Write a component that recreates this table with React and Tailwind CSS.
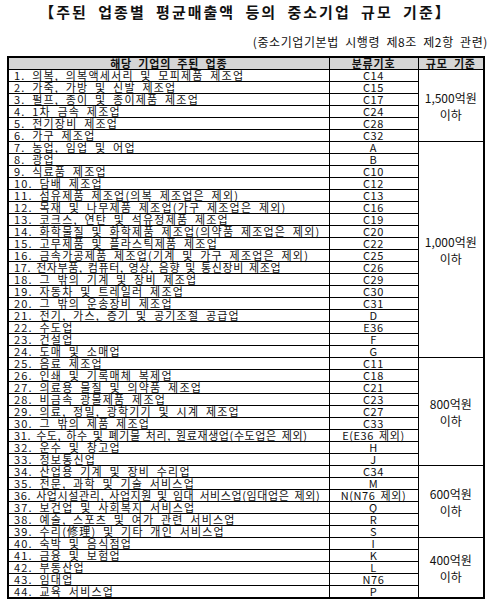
const groups = [
  {
    size: "1,500억원",
    rows: [
      ["1. 의복, 의복액세서리 및 모피제품 제조업", "C14"],
      ["2. 가죽, 가방 및 신발 제조업", "C15"],
      ["3. 펄프, 종이 및 종이제품 제조업", "C17"],
      ["4. 1차 금속 제조업", "C24"],
      ["5. 전기장비 제조업", "C28"],
      ["6. 가구 제조업", "C32"],
    ],
  },
  {
    size: "1,000억원",
    rows: [
      ["7. 농업, 임업 및 어업", "A"],
      ["8. 광업", "B"],
      ["9. 식료품 제조업", "C10"],
      ["10. 담배 제조업", "C12"],
      ["11. 섬유제품 제조업(의복 제조업은 제외)", "C13"],
      ["12. 목재 및 나무제품 제조업(가구 제조업은 제외)", "C16"],
      ["13. 코크스, 연탄 및 석유정제품 제조업", "C19"],
      ["14. 화학물질 및 화학제품 제조업(의약품 제조업은 제외)", "C20"],
      ["15. 고무제품 및 플라스틱제품 제조업", "C22"],
      ["16. 금속가공제품 제조업(기계 및 가구 제조업은 제외)", "C25"],
      ["17. 전자부품, 컴퓨터, 영상, 음향 및 통신장비 제조업", "C26", true],
      ["18. 그 밖의 기계 및 장비 제조업", "C29"],
      ["19. 자동차 및 트레일러 제조업", "C30"],
      ["20. 그 밖의 운송장비 제조업", "C31"],
      ["21. 전기, 가스, 증기 및 공기조절 공급업", "D"],
      ["22. 수도업", "E36"],
      ["23. 건설업", "F"],
      ["24. 도매 및 소매업", "G"],
    ],
  },
  {
    size: "800억원",
    rows: [
      ["25. 음료 제조업", "C11"],
      ["26. 인쇄 및 기록매체 복제업", "C18"],
      ["27. 의료용 물질 및 의약품 제조업", "C21"],
      ["28. 비금속 광물제품 제조업", "C23"],
      ["29. 의료, 정밀, 광학기기 및 시계 제조업", "C27"],
      ["30. 그 밖의 제품 제조업", "C33"],
      ["31. 수도, 하수 및 폐기물 처리, 원료재생업(수도업은 제외)", "E(E36 제외)", true],
      ["32. 운수 및 창고업", "H"],
      ["33. 정보통신업", "J"],
    ],
  },
  {
    size: "600억원",
    rows: [
      ["34. 산업용 기계 및 장비 수리업", "C34"],
      ["35. 전문, 과학 및 기술 서비스업", "M"],
      ["36. 사업시설관리, 사업지원 및 임대 서비스업(임대업은 제외)", "N(N76 제외)", true],
      ["37. 보건업 및 사회복지 서비스업", "Q"],
      ["38. 예술, 스포츠 및 여가 관련 서비스업", "R"],
      ["39. 수리(修理) 및 기타 개인 서비스업", "S"],
    ],
  },
  {
    size: "400억원",
    rows: [
      ["40. 숙박 및 음식점업", "I"],
      ["41. 금융 및 보험업", "K"],
      ["42. 부동산업", "L"],
      ["43. 임대업", "N76"],
      ["44. 교육 서비스업", "P"],
    ],
  },
];

export default function App() {
  return (
    <div className="w-[491px] h-[607px] bg-white text-[#111] font-['Noto_Sans_CJK_KR',sans-serif] overflow-hidden">
      <h1 className="pt-[2px] h-[24px] text-center text-[15px] leading-[20px] font-bold tracking-[2px] [word-spacing:5px] whitespace-nowrap">
        【주된 업종별 평균매출액 등의 중소기업 규모 기준】
      </h1>
      <p className="mt-[11px] pr-[3px] text-right text-[12px] leading-[14px] tracking-[0.6px] [word-spacing:3px] whitespace-nowrap">
        (중소기업기본법 시행령 제8조 제2항 관련)
      </p>
      <table className="ml-[7px] mt-[7px] w-[476px] table-fixed border-collapse border-2 border-black text-[11px] leading-[11px] tracking-[1.2px] [word-spacing:3px]">
        <colgroup>
          <col className="w-[321px]" />
          <col className="w-[89px]" />
          <col className="w-[66px]" />
        </colgroup>
        <thead>
          <tr className="h-[11px] bg-[#d6d6d6] whitespace-nowrap tracking-[0.8px]">
            <th className="border border-black p-0 font-bold">해당 기업의 주된 업종</th>
            <th className="border border-black p-0 font-bold">분류기호</th>
            <th className="border border-black p-0 font-bold">규모 기준</th>
          </tr>
        </thead>
        <tbody>
          {groups.map((group) =>
            group.rows.map(([name, code, tight], i) => (
              <tr key={name} className="h-[12px]">
                <td className={`border border-black p-0 pl-[5px] text-left whitespace-nowrap ${tight ? "tracking-[0.6px] [word-spacing:2px]" : ""}`}>{name}</td>
                <td className="border border-black p-0 text-center whitespace-nowrap tracking-[0.6px] [word-spacing:2px]">{code}</td>
                {i === 0 && (
                  <td rowSpan={group.rows.length} className="border border-black p-0 text-center align-middle text-[12px] leading-[17px] tracking-[0px] [word-spacing:0px] whitespace-nowrap">
                    {group.size}
                    <br />
                    이하
                  </td>
                )}
              </tr>
            ))
          )}
        </tbody>
      </table>
    </div>
  );
}
